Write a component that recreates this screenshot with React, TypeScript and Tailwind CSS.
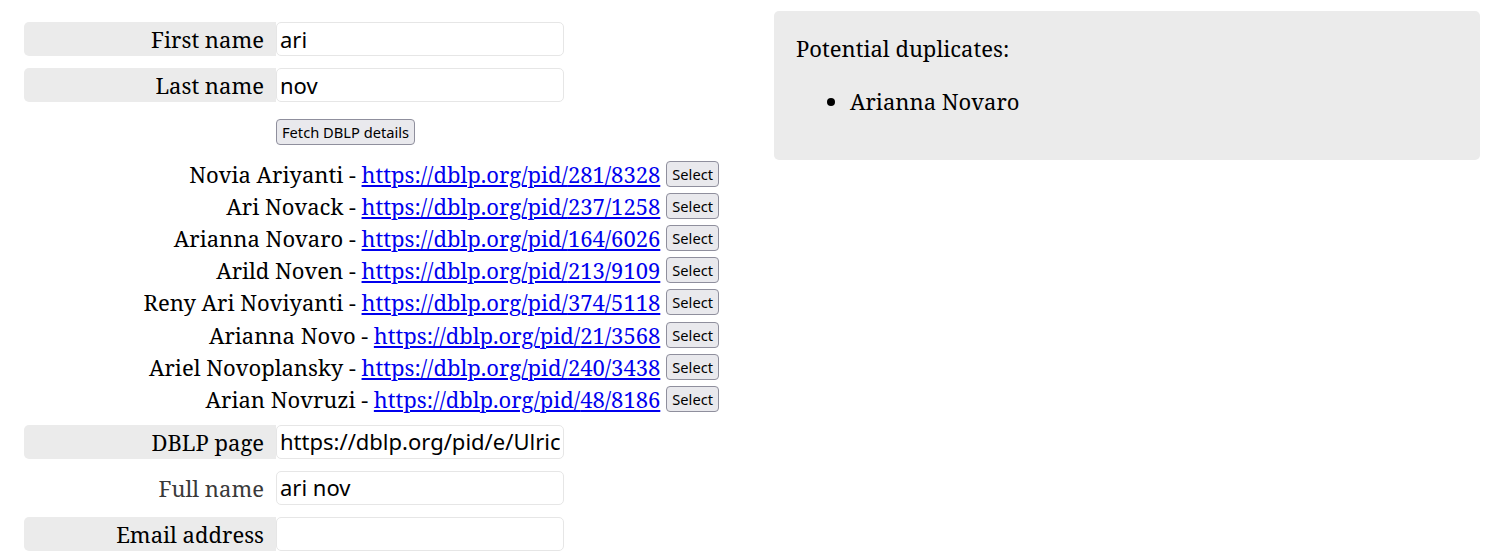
import React from 'react'

const serif = "font-['Noto_Serif','DejaVu_Serif',serif]"
const sans = "font-['Noto_Sans','Open_Sans',sans-serif]"

const results = [
  { name: 'Novia Ariyanti', pid: '281/8328' },
  { name: 'Ari Novack', pid: '237/1258' },
  { name: 'Arianna Novaro', pid: '164/6026' },
  { name: 'Arild Noven', pid: '213/9109' },
  { name: 'Reny Ari Noviyanti', pid: '374/5118' },
  { name: 'Arianna Novo', pid: '21/3568' },
  { name: 'Ariel Novoplansky', pid: '240/3438' },
  { name: 'Arian Novruzi', pid: '48/8186' },
]

function Field({ label, value, muted }: { label: string; value: string; muted?: boolean }) {
  return (
    <div className="flex h-[34px] w-[540px]">
      <label
        className={`w-[252px] shrink-0 rounded-l-[5px] pr-3 text-right text-[22px] leading-[34px] ${
          muted ? 'text-[#3a3a3a]' : 'bg-[#ebebeb] text-black'
        }`}
      >
        {label}
      </label>
      <input
        readOnly
        value={value}
        className={`${sans} w-[288px] min-w-0 rounded-[5px] border border-[#e6e6e6] bg-white px-[3px] text-[22px] text-black outline-none`}
      />
    </div>
  )
}

function Btn({ children }: { children: React.ReactNode }) {
  return (
    <button
      className={`${sans} rounded-[4px] border border-[#8f8f9d] bg-[#e9e9ed] px-[5px] text-[14.67px] leading-[24px] text-black`}
    >
      {children}
    </button>
  )
}

export default function App() {
  return (
    <div className={`${serif} flex gap-[55px] bg-white pl-6 pr-[25px] pt-[11px] text-black`}>
      {/* left: form */}
      <div className="w-[695px] shrink-0">
        <div className="mt-[11px] flex flex-col gap-3">
          <Field label="First name" value="ari" />
          <Field label="Last name" value="nov" />
        </div>
        <div className="mt-[17px] flex pl-[252px]">
          <Btn>Fetch DBLP details</Btn>
        </div>
        <div className="mt-[13px] flex flex-col items-end">
          {results.map(r => (
            <div key={r.pid} className="flex h-[32.1px] items-center text-[22px] leading-[32px]">
              <span>
                {r.name} -{' '}
                <a href="#" className="text-[#0000ee] underline">
                  https://dblp.org/pid/{r.pid}
                </a>
              </span>
              <span className="ml-[6px] flex">
                <Btn>Select</Btn>
              </span>
            </div>
          ))}
        </div>
        <div className="mt-[10px] flex flex-col gap-3">
          <Field label="DBLP page" value="https://dblp.org/pid/e/Ulrich" />
          <Field label="Full name" value="ari nov" muted />
          <Field label="Email address" value="" />
        </div>
      </div>

      {/* right: duplicates */}
      <div className="h-[149px] flex-1 rounded-[5px] bg-[#ebebeb] px-[22px] pt-[21px] text-[22px] leading-[33px]">
        <p>Potential duplicates:</p>
        <ul className="mt-[20px] list-disc pl-[54px]">
          <li>Arianna Novaro</li>
        </ul>
      </div>
    </div>
  )
}
